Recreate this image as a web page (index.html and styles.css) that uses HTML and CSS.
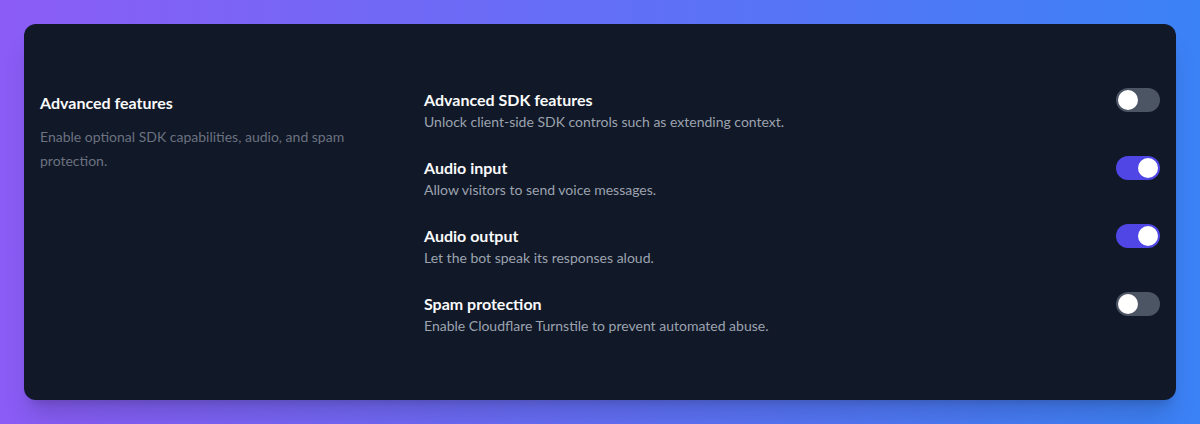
FILE: index.html
```html
<!DOCTYPE html>
<html>
<head>
<meta charset="utf-8">
<link rel="stylesheet" href="styles.css">
</head>
<body>
<div class="page">
  <div class="card">
    <div class="intro">
      <h2 class="intro-title">Advanced features</h2>
      <p class="intro-desc">Enable optional SDK capabilities, audio, and spam protection.</p>
    </div>
    <div class="rows">
      <div class="row">
        <div class="text">
          <div class="title">Advanced SDK features</div>
          <div class="desc">Unlock client-side SDK controls such as extending context.</div>
        </div>
        <div class="toggle"><span class="knob"></span></div>
      </div>
      <div class="row">
        <div class="text">
          <div class="title">Audio input</div>
          <div class="desc">Allow visitors to send voice messages.</div>
        </div>
        <div class="toggle on"><span class="knob"></span></div>
      </div>
      <div class="row">
        <div class="text">
          <div class="title">Audio output</div>
          <div class="desc">Let the bot speak its responses aloud.</div>
        </div>
        <div class="toggle on"><span class="knob"></span></div>
      </div>
      <div class="row">
        <div class="text">
          <div class="title">Spam protection</div>
          <div class="desc">Enable Cloudflare Turnstile to prevent automated abuse.</div>
        </div>
        <div class="toggle"><span class="knob"></span></div>
      </div>
    </div>
  </div>
</div>
</body>
</html>
```
FILE: styles.css
```css
* { box-sizing: border-box; }
html, body { margin: 0; padding: 0; }
body {
  font-family: "Lato", "Inter", sans-serif;
  width: 1200px;
  height: 424px;
  overflow: hidden;
}
.page {
  height: 424px;
  padding: 24px;
  background: linear-gradient(to right, #8b5cf6, #3b82f6);
}
.card {
  height: 376px;
  background: #111827;
  border-radius: 12px;
  box-shadow: 0 20px 25px -5px rgba(0,0,0,0.15), 0 8px 10px -6px rgba(0,0,0,0.15);
  padding: 64px 16px;
  display: grid;
  grid-template-columns: 352px 1fr;
  column-gap: 32px;
}
.intro { padding-top: 3px; }
.intro-title {
  margin: 0;
  font-size: 16px;
  font-weight: 700;
  line-height: 24px;
  color: #f9fafb;
}
.intro-desc {
  margin: 10px 0 0;
  font-size: 14px;
  line-height: 24px;
  color: #6b7280;
}
.rows { display: flex; flex-direction: column; gap: 24px; }
.row {
  display: flex;
  justify-content: space-between;
  align-items: flex-start;
}
.title {
  font-size: 16px;
  font-weight: 700;
  line-height: 24px;
  color: #f9fafb;
}
.desc {
  font-size: 14px;
  line-height: 20px;
  color: #9ca3af;
}
.toggle {
  width: 44px;
  height: 24px;
  border-radius: 12px;
  background: #4b5563;
  padding: 2px;
  display: flex;
}
.toggle.on { background: #4f46e5; justify-content: flex-end; }
.knob {
  width: 20px;
  height: 20px;
  border-radius: 50%;
  background: #ffffff;
}
```
